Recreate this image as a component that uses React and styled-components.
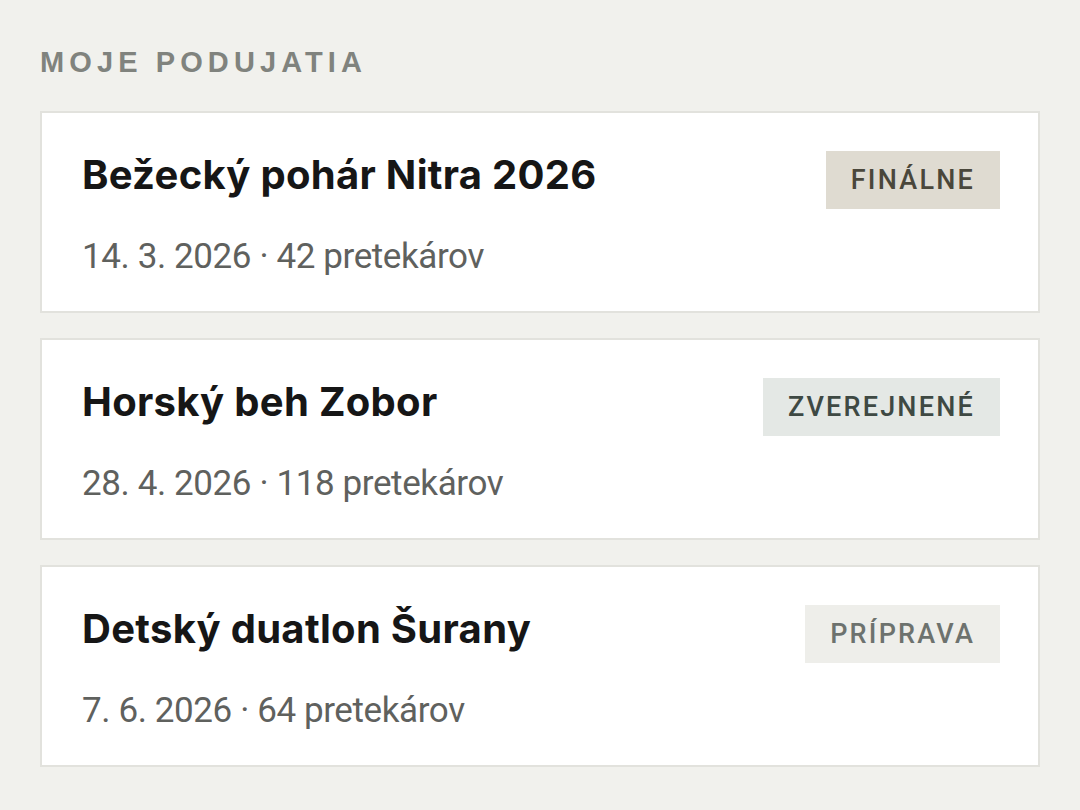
import React from "react";
import styled, { createGlobalStyle } from "styled-components";

const Global = createGlobalStyle`
  html, body { margin: 0; padding: 0; background: #f1f1ed; }
  body { width: 1080px; height: 810px; overflow: hidden; }
`;

const Page = styled.main`
  padding: 44px 40px 40px;
  display: flex;
  flex-direction: column;
  gap: 31px;
`;

const Heading = styled.h2`
  margin: 0;
  font-family: "Liberation Sans", Arial, sans-serif;
  font-weight: 700;
  font-size: 29px;
  line-height: 36px;
  letter-spacing: 5.1px;
  color: #80837e;
`;

const List = styled.div`
  display: flex;
  flex-direction: column;
  gap: 25px;
`;

const Card = styled.article`
  background: #ffffff;
  border: 2px solid #e2e2dd;
  height: 202px;
  box-sizing: border-box;
  padding: 38px 38px 0 40px;
  display: flex;
  justify-content: space-between;
  align-items: flex-start;
`;

const Info = styled.div`
  display: flex;
  flex-direction: column;
  gap: 38px;
`;

const Title = styled.h3`
  margin: 0;
  font-family: Inter, "Noto Sans", sans-serif;
  font-weight: 700;
  font-size: 40px;
  line-height: 48px;
  letter-spacing: 0.3px;
  color: #161616;
`;

const Meta = styled.div`
  font-family: Roboto, "Noto Sans", sans-serif;
  font-size: 35px;
  line-height: 40px;
  letter-spacing: -0.4px;
  color: #5f615e;
`;

const palette = {
  final: { bg: "#dfdbd1", fg: "#4a473b" },
  published: { bg: "#e4e8e5", fg: "#3e4943" },
  prep: { bg: "#eeeeea", fg: "#6d726e" },
};

const Badge = styled.span`
  flex: none;
  display: inline-flex;
  align-items: center;
  height: 58px;
  padding: 0 25px;
  box-sizing: border-box;
  font-family: Roboto, "Noto Sans", sans-serif;
  font-weight: 500;
  font-size: 27px;
  letter-spacing: 2.2px;
  text-transform: uppercase;
  background: ${(p) => palette[p.$kind].bg};
  color: ${(p) => palette[p.$kind].fg};
`;

const events = [
  { title: "Bežecký pohár Nitra 2026", date: "14. 3. 2026", count: 42, status: "Finálne", kind: "final" },
  { title: "Horský beh Zobor", date: "28. 4. 2026", count: 118, status: "Zverejnené", kind: "published" },
  { title: "Detský duatlon Šurany", date: "7. 6. 2026", count: 64, status: "Príprava", kind: "prep" },
];

export default function App() {
  return (
    <>
      <Global />
      <Page>
        <Heading>MOJE PODUJATIA</Heading>
        <List>
          {events.map((e) => (
            <Card key={e.title}>
              <Info>
                <Title>{e.title}</Title>
                <Meta>
                  {e.date} · {e.count} pretekárov
                </Meta>
              </Info>
              <Badge $kind={e.kind}>{e.status}</Badge>
            </Card>
          ))}
        </List>
      </Page>
    </>
  );
}
